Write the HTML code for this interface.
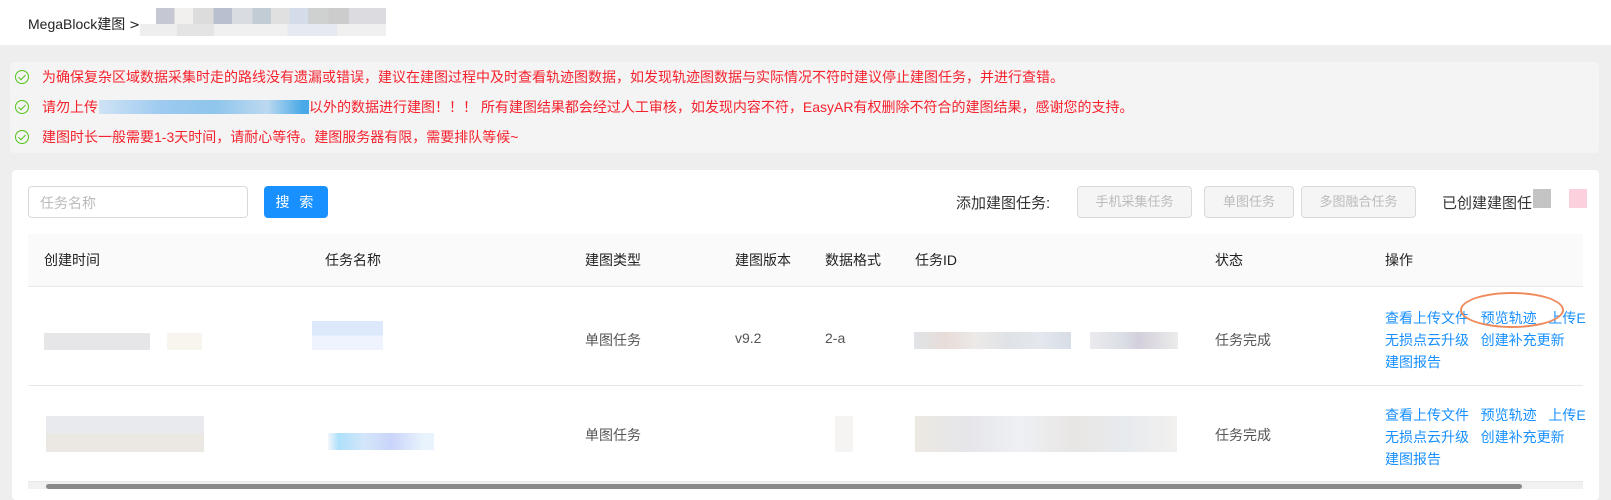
<!DOCTYPE html>
<html><head><meta charset="utf-8"><style>
*{margin:0;padding:0;box-sizing:border-box}
body{width:1611px;height:489px;overflow:hidden;background:#eeeeee;font-family:"Liberation Sans","Noto Sans CJK SC",sans-serif;font-size:14px;color:#333;position:relative}
.a{position:absolute;white-space:nowrap}
.blk{position:absolute}
.red{color:#f5222d;font-size:14px}
.chk{position:absolute;width:14px;height:14px;border:1.3px solid #52c41a;border-radius:50%}
.chk:after{content:"";position:absolute;left:3.5px;top:2px;width:3px;height:6px;border:solid #52c41a;border-width:0 1.3px 1.3px 0;transform:rotate(45deg)}
.btn{position:absolute;top:186px;height:32px;border:1px solid #d9d9d9;border-radius:4px;background:#f5f5f5;color:#bbb;text-align:center;line-height:30px;font-size:13px;white-space:nowrap}
.lk{color:#1890ff}
.th{position:absolute;top:250px;color:#222}
</style></head><body>
<div class="blk" style="left:0;top:0;width:1611px;height:45px;background:#fff"></div>
<div class="a" style="left:28px;top:14px;font-size:14px;color:#222">MegaBlock建图 <span style="font-family:'DejaVu Sans',sans-serif;font-size:13px">&gt;</span></div>
<div class="blk" style="left:156px;top:8px;width:230px;height:16px;background:linear-gradient(90deg,#c5c7d2 0 8%,#f2f0ee 8% 16%,#dcdcdc 16% 25%,#b8bfce 25% 33%,#d9dde1 33% 42%,#c2ccd5 42% 50%,#e0e0e0 50% 58%,#d3dce8 58% 66%,#cfd0d0 66% 75%,#cccccc 75% 84%,#dcdce0 84% 100%)"></div>
<div class="blk" style="left:140px;top:24px;width:246px;height:12px;background:linear-gradient(90deg,#eee 0 15%,#e4e4e4 15% 30%,#f0f0f0 30% 60%,#e6e9f0 60% 80%,#f0f0f0 80%)"></div>

<div class="blk" style="left:10px;top:62px;width:1589px;height:91px;background:#f4f4f4;border-radius:4px"></div>
<div class="chk" style="left:15px;top:70px"></div>
<div class="a red" style="left:42px;top:67px">为确保复杂区域数据采集时走的路线没有遗漏或错误，建议在建图过程中及时查看轨迹图数据，如发现轨迹图数据与实际情况不符时建议停止建图任务，并进行查错。</div>
<div class="chk" style="left:15px;top:100px"></div>
<div class="a red" style="left:42px;top:97px">请勿上传</div>
<div class="blk" style="left:99px;top:100px;width:210px;height:14px;background:linear-gradient(90deg,#cfe3f4,#9dcaf0 30%,#8fc5ec 55%,#bcd9f0 80%,#49a9e6 97%)"></div>
<div class="a red" style="left:309px;top:97px">以外的数据进行建图！！！ 所有建图结果都会经过人工审核，如发现内容不符，EasyAR有权删除不符合的建图结果，感谢您的支持。</div>
<div class="chk" style="left:15px;top:130px"></div>
<div class="a red" style="left:42px;top:127px">建图时长一般需要1-3天时间，请耐心等待。建图服务器有限，需要排队等候~</div>

<div class="blk" style="left:12px;top:170px;width:1587px;height:330px;background:#fff;border-radius:4px"></div>
<div class="blk" style="left:28px;top:186px;width:220px;height:32px;border:1px solid #d9d9d9;border-radius:4px"></div>
<div class="a" style="left:40px;top:193px;color:#bbb">任务名称</div>
<div class="blk" style="left:264px;top:186px;width:64px;height:32px;background:#1890ff;border-radius:4px;color:#fff;text-align:center;line-height:32px;letter-spacing:3px">搜 索</div>
<div class="a" style="left:956px;top:192px;font-size:15px;color:#333">添加建图任务:</div>
<div class="btn" style="left:1077px;width:115px">手机采集任务</div>
<div class="btn" style="left:1204px;width:90px">单图任务</div>
<div class="btn" style="left:1301px;width:115px">多图融合任务</div>
<div class="a" style="left:1442px;top:192px;font-size:15px;color:#333">已创建建图任</div>
<div class="blk" style="left:1533px;top:189px;width:18px;height:19px;background:#c4c4c4"></div>
<div class="blk" style="left:1569px;top:189px;width:18px;height:19px;background:#fdd0dd"></div>

<div class="blk" style="left:28px;top:234px;width:1555px;height:53px;background:#fafafa;border-bottom:1px solid #e8e8e8"></div>
<div class="th" style="left:44px">创建时间</div>
<div class="th" style="left:325px">任务名称</div>
<div class="th" style="left:585px">建图类型</div>
<div class="th" style="left:735px">建图版本</div>
<div class="th" style="left:825px">数据格式</div>
<div class="th" style="left:915px">任务ID</div>
<div class="th" style="left:1215px">状态</div>
<div class="th" style="left:1385px">操作</div>

<div class="blk" style="left:28px;top:385px;width:1555px;height:1px;background:#e8e8e8"></div>
<div class="blk" style="left:28px;top:481px;width:1555px;height:1px;background:#e8e8e8"></div>

<!-- row1 -->
<div class="blk" style="left:44px;top:333px;width:106px;height:17px;background:#e6e6e8"></div>
<div class="blk" style="left:167px;top:333px;width:35px;height:17px;background:#f8f4ee"></div>
<div class="blk" style="left:312px;top:321px;width:71px;height:29px;background:linear-gradient(#dce8fb 50%,#eef3fd 50%)"></div>
<div class="a" style="left:585px;top:330px;color:#555">单图任务</div>
<div class="a" style="left:735px;top:330px;color:#555">v9.2</div>
<div class="a" style="left:825px;top:330px;color:#555">2-a</div>
<div class="blk" style="left:914px;top:332px;width:157px;height:17px;background:linear-gradient(90deg,#e0e4e8,#e8dcd8 20%,#eceae8 40%,#dfe2e6 60%,#e4e8ee 80%,#d7dde6)"></div>
<div class="blk" style="left:1090px;top:332px;width:88px;height:17px;background:linear-gradient(90deg,#ebebef,#d9dde4 40%,#d3cfdc 55%,#ececea)"></div>
<div class="a" style="left:1215px;top:330px;color:#555">任务完成</div>
<div class="a lk" style="left:1385px;top:308px">查看上传文件&nbsp;&nbsp;&nbsp;预览轨迹&nbsp;&nbsp;&nbsp;上传E</div>
<div class="a lk" style="left:1385px;top:330px">无损点云升级&nbsp;&nbsp;&nbsp;创建补充更新</div>
<div class="a lk" style="left:1385px;top:352px">建图报告</div>
<div class="blk" style="left:1460px;top:292px;width:104px;height:36px;border:2.5px solid #ef8a5c;border-radius:50%"></div>

<!-- row2 -->
<div class="blk" style="left:46px;top:416px;width:158px;height:36px;background:linear-gradient(#e8eaee 50%,#ebe8e4 50%)"></div>
<div class="blk" style="left:328px;top:433px;width:106px;height:17px;background:linear-gradient(90deg,#f4f6fc,#aee0fb 10%,#d4e6fa 35%,#c9d4fa 60%,#e8f3fd 90%)"></div>
<div class="a" style="left:585px;top:425px;color:#555">单图任务</div>
<div class="blk" style="left:835px;top:416px;width:18px;height:36px;background:#f6f4f2"></div>
<div class="blk" style="left:915px;top:416px;width:262px;height:36px;background:linear-gradient(90deg,#ece8e2,#e6e6ea 20%,#eef0f4 40%,#e8e6e4 60%,#e7eaee 80%,#f2f0ee)"></div>
<div class="a" style="left:1215px;top:425px;color:#555">任务完成</div>
<div class="a lk" style="left:1385px;top:405px">查看上传文件&nbsp;&nbsp;&nbsp;预览轨迹&nbsp;&nbsp;&nbsp;上传E</div>
<div class="a lk" style="left:1385px;top:427px">无损点云升级&nbsp;&nbsp;&nbsp;创建补充更新</div>
<div class="a lk" style="left:1385px;top:449px">建图报告</div>

<div class="blk" style="left:28px;top:482px;width:1555px;height:7px;background:#f1f1f1"></div>
<div class="blk" style="left:46px;top:484px;width:1476px;height:5px;background:#8a8a8a;border-radius:3px"></div>
</body></html>
